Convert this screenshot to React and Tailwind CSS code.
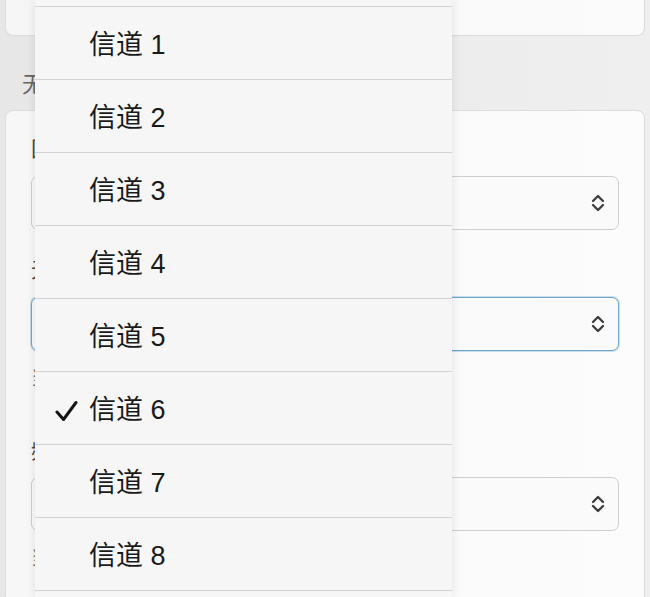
import React from 'react';

const channels = ['自动', '信道 1', '信道 2', '信道 3', '信道 4', '信道 5', '信道 6', '信道 7', '信道 8', '信道 9', '信道 10'];
const selected = '信道 6';

function Chevrons() {
  return (
    <svg width="16" height="20" viewBox="0 0 16 20" fill="none" stroke="#3d3d3d" strokeWidth="2.3" strokeLinecap="round" strokeLinejoin="round">
      <path d="M3 8 L8 3 L13 8" />
      <path d="M3 12 L8 17 L13 12" />
    </svg>
  );
}

function Check() {
  return (
    <svg width="23" height="22" viewBox="0 0 23 22" fill="none" stroke="#151515" strokeWidth="3" strokeLinecap="round" strokeLinejoin="round">
      <path d="M2 12 L8.5 19.5 L21 2.5" />
    </svg>
  );
}

function SelectBox({ value, focused }) {
  return (
    <div
      className={
        'h-[54px] rounded-[7px] border bg-[#fafafa] flex items-center justify-between pl-[16px] pr-[12px] ' +
        (focused ? 'border-[#6fa6cc] shadow-[0_0_0_1px_rgba(111,166,204,0.35)]' : 'border-[#cfcfcf]')
      }
    >
      <span className="text-[22px] text-[#1c1c1c]">{value}</span>
      <Chevrons />
    </div>
  );
}

export default function App() {
  return (
    <div className="relative w-full h-[597px] overflow-hidden bg-gradient-to-r from-[#e7e7e7] to-[#efefef] font-['Liberation_Sans','Noto_Sans_CJK_SC',sans-serif]">
      {/* page */}
      <div className="mx-[5px] h-[36px] rounded-b-[8px] border-x border-b border-[#dcdcdc] bg-gradient-to-r from-[#f6f6f6] to-[#fbfbfb]" />

      <div className="h-[74px] pt-[36px] pl-[22px]">
        <span className="text-[22px] leading-[26px] text-[#666]">无线设置</span>
      </div>

      <div className="mx-[5px] rounded-[8px] border border-[#dcdcdc] bg-gradient-to-r from-[#f7f7f7] to-[#fcfcfc] px-[25px] pt-[25px] pb-[40px]">
        <div className="text-[21px] leading-[26px] text-[#444]">国家/地区</div>
        <div className="mt-[14px]">
          <SelectBox value="中国" />
        </div>

        <div className="mt-[27px] text-[21px] leading-[26px] text-[#444]">无线信道</div>
        <div className="mt-[14px]">
          <SelectBox value={selected} focused />
        </div>
        <div className="mt-[15px] text-[19px] leading-[26px] text-[#777]">当前工作信道：6</div>

        <div className="mt-[46px] text-[21px] leading-[26px] text-[#444]">频道带宽</div>
        <div className="mt-[13px]">
          <SelectBox value="20/40MHz" />
        </div>
        <div className="mt-[15px] text-[19px] leading-[26px] text-[#777]">当前工作带宽：40MHz</div>
      </div>

      {/* open menu */}
      <div className="absolute left-[35px] top-0 w-[417px] h-[597px] overflow-hidden bg-[#f6f6f6] shadow-[0_0_10px_rgba(0,0,0,0.10)]">
        <div className="-mt-[66px]">
          {channels.map((c) => (
            <div key={c} className="h-[73px] border-b border-[#d3d3d3] flex items-center pl-[20px] pt-[5px]">
              <span className="w-[34px] flex items-center">{c === selected && <Check />}</span>
              <span className="text-[27px] text-[#1a1a1a]">{c}</span>
            </div>
          ))}
        </div>
      </div>
    </div>
  );
}
